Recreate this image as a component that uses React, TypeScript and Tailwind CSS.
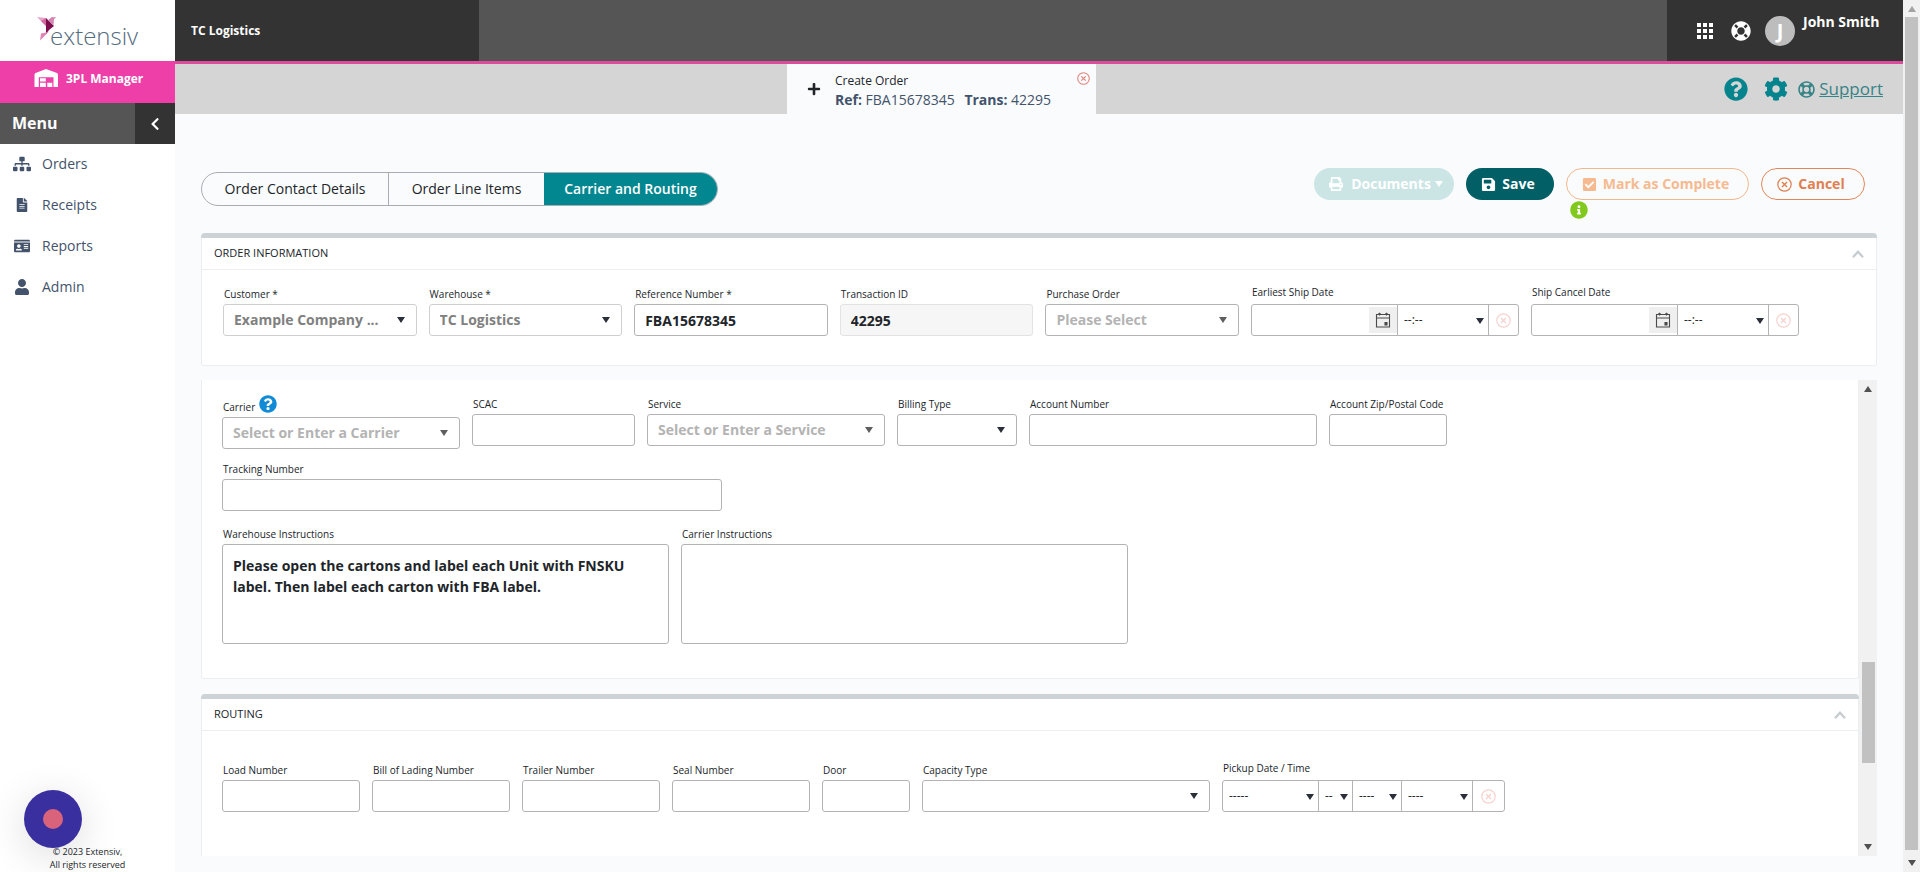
import type { ReactNode } from "react";
import { clsx } from "clsx";
import {
  FaCheckSquare,
  FaChevronLeft,
  FaCog,
  FaFileAlt,
  FaIdCard,
  FaInfoCircle,
  FaLifeRing,
  FaPlus,
  FaPrint,
  FaQuestionCircle,
  FaRegLifeRing,
  FaSave,
  FaSitemap,
  FaUser,
} from "react-icons/fa";
import { MdApps } from "react-icons/md";

const NAV = [
  { label: "Orders", icon: <FaSitemap size={18} aria-hidden="true" /> },
  { label: "Receipts", icon: <FaFileAlt size={14} aria-hidden="true" /> },
  { label: "Reports", icon: <FaIdCard size={16} aria-hidden="true" /> },
  { label: "Admin", icon: <FaUser size={16} aria-hidden="true" /> },
];

const BOX = "h-8 w-full rounded-[3px] border border-[#b3b3b3] bg-white px-2.5 text-sm font-bold text-[#212529] outline-none";

/* ---------- icons ---------- */

function CloseCircle({ className }: { className: string }) {
  return (
    <svg viewBox="0 0 16 16" className={className} fill="none" stroke="currentColor" strokeWidth="1.3" aria-hidden="true">
      <circle cx="8" cy="8" r="7.1" />
      <path d="M5.3 5.3l5.4 5.4M10.7 5.3l-5.4 5.4" strokeWidth="1.5" />
    </svg>
  );
}

function CalendarIcon() {
  return (
    <svg viewBox="0 0 16 16" className="size-4" fill="none" stroke="#4a4a4a" strokeWidth="1.1" aria-hidden="true">
      <path d="M1.500 2.500h13v12.500h-13zM1.500 6h13" />
      <path d="M4.500 .8v2.800M11.500 .8v2.800M3.200 1.700h2.600M10.200 1.700h2.600" />
      <path d="M10 10.500h2v2.500h-2z" fill="#4a4a4a" />
    </svg>
  );
}

function WarehouseIcon() {
  return (
    <svg viewBox="0 0 24 18" className="h-[18px] w-6" fill="#fff" aria-hidden="true">
      <path
        fillRule="evenodd"
        d="M12 0l10.300 3.700C23.400 4.100 24 4.800 24 6v12h-4.500V8.200H4.800V18H.5V6c0-1.200.6-1.900 1.700-2.300z"
      />
      <path d="M6 9.200h5.800v3.300H6zM6 13.800h5.800V18H6zM13.300 13.800h5V18h-5z" />
    </svg>
  );
}

function Logo() {
  return (
    <a href="#home" className="relative flex h-[61px] items-start bg-white pt-5 pl-[50px]" aria-label="extensiv">
      <svg viewBox="0 0 20 24" className="absolute top-[17px] left-[37px] h-6 w-5" aria-hidden="true">
        <path d="M0 0l9 1v8z" fill="#e9a3c9" />
        <path d="M9 1v8L4 4z" fill="#d4699f" />
        <path d="M9 1l8 8-5 4-3 4z" fill="#7d0f50" />
        <path d="M11 3l4-3 4.500.5-2.500 1.500-.5 6z" fill="#d685b2" />
        <path d="M9 15.500l-5 1-1 7 9-9z" fill="#e085b4" />
      </svg>
      <span className="text-2xl leading-8 font-light text-[#556b80]">extensiv</span>
    </a>
  );
}

function Arrow({ className = "text-[#2b2f3a]" }: { className?: string }) {
  return (
    <svg viewBox="0 0 8 6" className={clsx("pointer-events-none h-1.5 w-2", className)} fill="currentColor" aria-hidden="true">
      <path d="M0 0h8L4 6z" />
    </svg>
  );
}

/* ---------- form parts ---------- */

type FieldProps = {
  id: string;
  label: string;
  className: string;
  raised?: boolean;
  help?: boolean;
  children: ReactNode;
};

function Field({ id, label, className, raised, help, children }: FieldProps) {
  return (
    <div className={className}>
      <div className={clsx("flex pl-px", raised ? "mb-1" : "mb-0.5", help ? "h-[19px] items-end gap-1" : "h-4")}>
        <label htmlFor={id} className="text-[10px] leading-4 whitespace-nowrap text-[#212529]">
          {label}
        </label>
        {help && (
          <button type="button" aria-label="Carrier help" className="mb-0.5 text-[#118bd6]">
            <FaQuestionCircle size={18} aria-hidden="true" />
          </button>
        )}
      </div>
      {children}
    </div>
  );
}

function TextField({ id, label, className }: { id: string; label: string; className: string }) {
  return (
    <Field id={id} label={label} className={className}>
      <input id={id} type="text" className={clsx(BOX, "block")} />
    </Field>
  );
}

type SelectFieldProps = {
  id: string;
  label: string;
  className: string;
  value?: string;
  tone?: string;
  border?: string;
  arrow?: string;
  help?: boolean;
};

function SelectField({ id, label, className, value = "", tone, border, arrow, help }: SelectFieldProps) {
  return (
    <Field id={id} label={label} className={className} help={help}>
      <div className="relative">
        <select
          id={id}
          className={clsx(
            "block h-8 w-full appearance-none rounded-[3px] border bg-white pr-7 pl-2.5 text-sm font-bold outline-none",
            tone ?? "text-[#b3b3b3]",
            border ?? "border-[#b3b3b3]",
          )}
        >
          <option>{value}</option>
        </select>
        <Arrow className={clsx("absolute top-[13px] right-3", arrow ?? "text-[#2b2f3a]")} />
      </div>
    </Field>
  );
}

function MiniSelect({ id, label, value, className }: { id?: string; label: string; value: string; className: string }) {
  return (
    <div className={clsx("relative border-r border-[#b3b3b3]", className)}>
      <select id={id} aria-label={label} className="block h-full w-full appearance-none bg-transparent pl-1.5 text-xs text-[#212529] outline-none">
        <option>{value}</option>
      </select>
      <Arrow className="absolute top-[13px] right-1 text-[#2b2f3a]" />
    </div>
  );
}

function ClearButton() {
  return (
    <button type="button" aria-label="Clear" className="flex flex-1 items-center justify-center text-[#f6d3cf]">
      <CloseCircle className="size-[15px]" />
    </button>
  );
}

function DateField({ id, label }: { id: string; label: string }) {
  return (
    <Field id={id} label={label} className="w-[268px] shrink-0" raised>
      <div className="flex h-8 rounded-[3px] border border-[#b3b3b3] bg-white">
        <div className="flex w-[146px] border-r border-[#b3b3b3]">
          <input id={id} type="text" className="w-0 flex-1 px-2.5 text-sm font-bold outline-none" />
          <button type="button" aria-label="Open calendar" className="my-0.5 flex w-7 items-center justify-center bg-[#efefef]">
            <CalendarIcon />
          </button>
        </div>
        <MiniSelect label={`${label} time`} value="--:--" className="w-[91px]" />
        <ClearButton />
      </div>
    </Field>
  );
}

function CardHeader({ title }: { title: string }) {
  return (
    <div className="rounded-t-[4px] border-t-[5px] border-[#cdd2d6] bg-white">
      <div className="flex h-8 items-center justify-between border-x border-b border-[#eceff2] pr-3 pl-3">
        <h2 className="text-[11px] text-[#212529]">{title}</h2>
        <button type="button" aria-label={`Collapse ${title.toLowerCase()}`} className="text-[#c6ccd0]">
          <svg viewBox="0 0 12 8" className="h-2 w-3" fill="none" stroke="currentColor" strokeWidth="2.3" aria-hidden="true">
            <path d="M1 7.200l5-5.400 5 5.400" />
          </svg>
        </button>
      </div>
    </div>
  );
}

/* ---------- page ---------- */

function Sidebar() {
  return (
    <aside className="flex w-[175px] shrink-0 flex-col bg-white">
      <Logo />
      <div className="flex h-[42px] items-start gap-2 bg-[#ee3fa9] pt-2 pl-[34px] text-white">
        <WarehouseIcon />
        <span className="text-xs leading-5 font-bold">3PL Manager</span>
      </div>
      <div className="flex h-[41px] bg-[#555] text-white">
        <h2 className="flex-1 pl-3 text-base leading-10 font-bold">Menu</h2>
        <button type="button" aria-label="Collapse menu" className="flex w-10 items-center justify-center bg-[#333]">
          <FaChevronLeft size={14} aria-hidden="true" />
        </button>
      </div>
      <nav className="flex-1">
        {NAV.map((item) => (
          <a key={item.label} href={`#${item.label.toLowerCase()}`} className="flex h-[41px] items-center pb-0.5 text-sm text-[#43536b]">
            <span className="flex w-[42px] justify-center pl-0.5">{item.icon}</span>
            {item.label}
          </a>
        ))}
      </nav>
      <div className="relative pb-px text-center text-[9px] leading-[13px] text-[#212529]">
        {/* Screen recorder bubble */}
        <button
          type="button"
          aria-label="Record"
          className="absolute bottom-6 left-6 flex size-[58px] items-center justify-center rounded-full bg-[#3a2f9f] shadow-[0_8px_40px_rgba(0,0,0,0.14)]"
        >
          <span className="size-5 rounded-full bg-[#da637c]" />
        </button>
        <p className="relative">
          © 2023 Extensiv,
          <br />
          All rights reserved
        </p>
      </div>
    </aside>
  );
}

function TopBar() {
  return (
    <header className="flex h-16 shrink-0 justify-between border-b-[3px] border-[#dd4b9f] bg-[#555] text-white">
      <div className="w-[304px] bg-[#333] px-4 text-xs leading-[61px] font-bold">TC Logistics</div>
      <div className="flex w-[236px] items-center bg-[#333] pl-[26px]">
        <button type="button" aria-label="Apps">
          <MdApps size={24} aria-hidden="true" />
        </button>
        <button type="button" aria-label="Help center" className="ml-3.5">
          <FaLifeRing size={20} aria-hidden="true" />
        </button>
        <div className="ml-3.5 flex size-[30px] items-center justify-center rounded-full bg-[#bdbdbd] text-xl font-bold">J</div>
        <span className="mb-[18px] ml-2 text-sm font-bold">John Smith</span>
      </div>
    </header>
  );
}

function TabStrip() {
  return (
    <div className="flex h-[50px] shrink-0 bg-[#d5d5d5]">
      <div className="flex-[592] pl-5" />
      <div className="relative flex w-[309px] items-center bg-[#fafbfd] pl-5 text-[#212529]">
        <FaPlus size={14} aria-hidden="true" />
        <div className="ml-3.5 pt-1">
          <p className="text-xs leading-[18px]">Create Order</p>
          <p className="text-sm leading-5 text-[#43536b]">
            <b>Ref:</b> FBA15678345 <b className="ml-1.5">Trans:</b> 42295
          </p>
        </div>
        <button type="button" aria-label="Close tab" className="absolute top-2 right-1.5 text-[#e0837b]">
          <CloseCircle className="size-[13px]" />
        </button>
      </div>
      <div className="flex flex-[787] items-center justify-end pr-5 text-[#06848e]">
        <button type="button" aria-label="Help">
          <FaQuestionCircle size={24} aria-hidden="true" />
        </button>
        <button type="button" aria-label="Settings" className="ml-4">
          <FaCog size={24} aria-hidden="true" />
        </button>
        <a href="#support" className="ml-2.5 flex items-center gap-1 text-[17px] text-[#378487] underline">
          <FaRegLifeRing size={17} aria-hidden="true" />
          Support
        </a>
      </div>
    </div>
  );
}

function Toolbar() {
  return (
    <div className="flex h-[65px] shrink-0 items-start justify-between">
      <div className="mt-1 flex h-[34px] overflow-hidden rounded-full border border-[#a9adb3] text-sm font-medium text-[#212529]">
        <button type="button" className="w-[187px] border-r border-[#a9adb3]">
          Order Contact Details
        </button>
        <button type="button" className="w-[155px]">
          Order Line Items
        </button>
        <button type="button" className="w-[173px] bg-[#028690] font-semibold text-white">
          Carrier and Routing
        </button>
      </div>
      <div className="flex items-start gap-3 pr-3 text-sm font-bold">
        <button type="button" disabled className="flex h-8 w-[140px] items-center justify-center gap-2 rounded-full bg-[#cbe5e5] pl-1 text-white">
          <FaPrint size={14} aria-hidden="true" />
          <span className="flex items-center gap-1">
            Documents
            <Arrow className="text-white" />
          </span>
        </button>
        <button type="button" className="flex h-8 w-[88px] items-center justify-center gap-1.5 rounded-full bg-[#025f66] pr-1 text-white">
          <FaSave size={15} aria-hidden="true" />
          Save
        </button>
        <div>
          <button
            type="button"
            className="flex h-8 w-[183px] items-center justify-center gap-1.5 rounded-full border border-[#f3b78e] pr-1 text-[#f5ba8f]"
          >
            <FaCheckSquare size={15} aria-hidden="true" />
            Mark as Complete
          </button>
          <FaInfoCircle size={18} className="mt-px ml-1 text-[#82c91e]" aria-hidden="true" />
        </div>
        <button
          type="button"
          className="flex h-8 w-[104px] items-center justify-center gap-1.5 rounded-full border border-[#e2875a] pr-1 text-[#df7f52]"
        >
          <CloseCircle className="size-[15px]" />
          Cancel
        </button>
      </div>
    </div>
  );
}

function OrderInformation() {
  return (
    <section className="shrink-0">
      <CardHeader title="ORDER INFORMATION" />
      <div className="rounded-b-[3px] border-x border-b border-[#eceff2] bg-white px-[21px] pt-3.5 pb-[29px]">
        <div className="flex max-w-[1576px] items-end gap-3">
          <SelectField
            id="customer"
            label="Customer *"
            className="flex-1"
            value="Example Company ..."
            tone="text-[#808080]"
            border="border-[#cfcfcf]"
          />
          <SelectField
            id="warehouse"
            label="Warehouse *"
            className="flex-1"
            value="TC Logistics"
            tone="text-[#808080]"
            border="border-[#cfcfcf]"
          />
          <Field id="reference" label="Reference Number *" className="flex-1">
            <input id="reference" type="text" defaultValue="FBA15678345" className={clsx(BOX, "block")} />
          </Field>
          <Field id="transaction" label="Transaction ID" className="flex-1">
            <input
              id="transaction"
              type="text"
              readOnly
              value="42295"
              className="block h-8 w-full rounded-[3px] border border-[#e3e3e3] bg-[#f6f6f6] px-2.5 text-sm font-bold text-[#212529] outline-none"
            />
          </Field>
          <SelectField id="po" label="Purchase Order" className="flex-1" value="Please Select" arrow="text-[#5e5e5e]" />
          <DateField id="earliest" label="Earliest Ship Date" />
          <DateField id="cancel-date" label="Ship Cancel Date" />
        </div>
      </div>
    </section>
  );
}

function CarrierPanel() {
  return (
    <section className="shrink-0 rounded-b-[3px] border-x border-b border-[#eceff2] bg-white px-5 pt-4 pb-[34px]">
      <div className="flex items-start gap-3">
        <SelectField id="carrier" label="Carrier" className="w-[238px]" value="Select or Enter a Carrier" arrow="text-[#5e5e5e]" help />
        <TextField id="scac" label="SCAC" className="w-[163px]" />
        <SelectField id="service" label="Service" className="w-[238px]" value="Select or Enter a Service" arrow="text-[#5e5e5e]" />
        <SelectField id="billing" label="Billing Type" className="w-[120px]" />
        <TextField id="account" label="Account Number" className="w-[288px]" />
        <TextField id="zip" label="Account Zip/Postal Code" className="w-[118px]" />
      </div>
      <TextField id="tracking" label="Tracking Number" className="mt-3 w-[500px]" />
      <div className="mt-[15px] flex gap-3">
        <Field id="wh-instructions" label="Warehouse Instructions" className="w-[447px]">
          <textarea
            id="wh-instructions"
            defaultValue="Please open the cartons and label each Unit with FNSKU label. Then label each carton with FBA label."
            className="block h-[100px] w-full resize-none rounded-[3px] border border-[#b3b3b3] py-2.5 pr-8 pl-2.5 text-sm leading-[21px] font-bold text-[#212529] outline-none"
          />
        </Field>
        <Field id="carrier-instructions" label="Carrier Instructions" className="w-[447px]">
          <textarea
            id="carrier-instructions"
            className="block h-[100px] w-full resize-none rounded-[3px] border border-[#b3b3b3] py-2.5 pr-8 pl-2.5 text-sm leading-[21px] font-bold text-[#212529] outline-none"
          />
        </Field>
      </div>
    </section>
  );
}

function RoutingPanel() {
  return (
    <section className="mt-[15px] flex flex-1 flex-col">
      <CardHeader title="ROUTING" />
      <div className="flex flex-1 items-start border-x border-[#eceff2] bg-white px-5 pt-[29px]">
        <div className="flex items-end gap-3">
          <TextField id="load" label="Load Number" className="w-[138px]" />
          <TextField id="bol" label="Bill of Lading Number" className="w-[138px]" />
          <TextField id="trailer" label="Trailer Number" className="w-[138px]" />
          <TextField id="seal" label="Seal Number" className="w-[138px]" />
          <TextField id="door" label="Door" className="w-[88px]" />
          <SelectField id="capacity" label="Capacity Type" className="w-[288px]" />
          <Field id="pickup" label="Pickup Date / Time" className="w-[283px]" raised>
            <div className="flex h-8 rounded-[3px] border border-[#b3b3b3] bg-white">
              <MiniSelect id="pickup" label="Pickup date" value="-----" className="w-24" />
              <MiniSelect label="Pickup hour" value="--" className="w-[34px]" />
              <MiniSelect label="Pickup minute" value="----" className="w-[49px]" />
              <MiniSelect label="Pickup time zone" value="----" className="w-[71px]" />
              <ClearButton />
            </div>
          </Field>
        </div>
      </div>
    </section>
  );
}

export default function App() {
  return (
    <div className="flex min-h-screen bg-[#fafbfd] font-['Open_Sans','Noto_Sans',sans-serif]">
      <Sidebar />
      <div className="flex min-w-0 flex-1 flex-col">
        <TopBar />
        <TabStrip />
        <main className="flex flex-1 flex-col px-[26px] pt-[54px] pb-4">
          <Toolbar />
          <OrderInformation />
          <div className="mt-3.5 flex flex-1">
            <div className="flex min-w-0 flex-1 flex-col">
              <CarrierPanel />
              <RoutingPanel />
            </div>
            <div className="flex w-[18px] flex-col items-center bg-[#f1f1f1] py-1.5" aria-hidden="true">
              <Arrow className="rotate-180 text-[#505050]" />
              <div className="flex-[268]" />
              <div className="h-[101px] w-[13px] bg-[#c1c1c1]" />
              <div className="flex-[80]" />
              <Arrow className="text-[#505050]" />
            </div>
          </div>
        </main>
      </div>
      {/* Window scrollbar */}
      <div className="flex w-[17px] shrink-0 flex-col items-center bg-[#f1f1f1] py-1.5" aria-hidden="true">
        <Arrow className="rotate-180 text-[#a3a3a3]" />
        <div className="mt-[5px] mb-2.5 w-[13px] flex-1 bg-[#c1c1c1]" />
        <Arrow className="text-[#505050]" />
      </div>
    </div>
  );
}
